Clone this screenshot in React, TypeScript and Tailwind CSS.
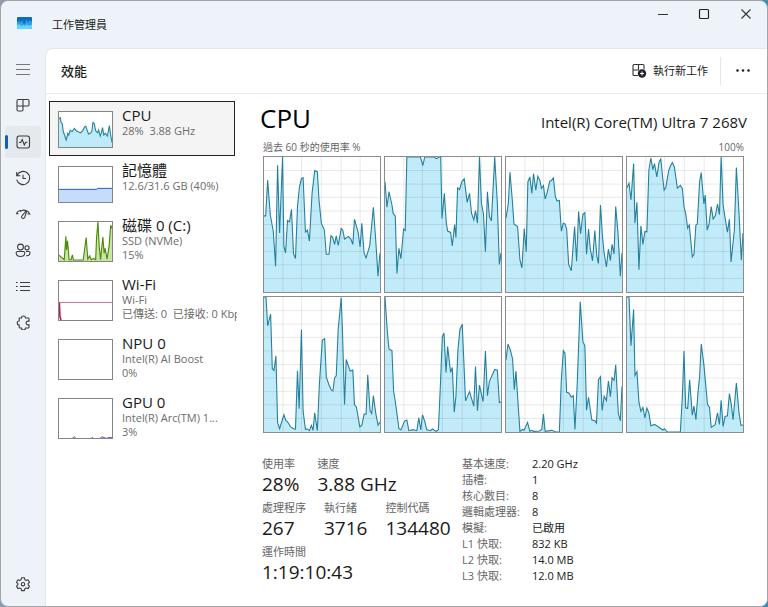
import React, { useState } from 'react';
import clsx from 'clsx';

interface Resource {
  id: string;
  name: string;
  lines: string[];
  graph: React.ReactNode;
}

// Usage curves, x runs 0-350 and y runs 0 (100%) to 408 (0%)
const CORES = [
  '0,178 5,178 11,70 19,175 28,225 35,330 41,25 47,230 56,0 60,270 65,290 71,192 77,196 83,158 89,292 95,307 101,150 107,90 113,65 118,63 125,227 131,221 137,254 145,110 153,41 161,45 166,130 173,200 182,220 188,294 196,294 202,238 207,242 213,264 218,238 224,267 233,216 238,222 243,248 255,240 262,248 268,264 273,188 284,228 290,272 295,200 302,290 308,305 319,268 330,152 337,250 344,360 350,290',
  '0,75 6,152 12,105 21,145 25,172 31,178 36,352 42,276 48,307 56,218 61,222 66,0 107,0 114,26 120,0 149,0 154,5 159,3 162,0 168,0 172,186 179,110 185,200 189,224 198,228 203,269 210,204 214,243 219,93 225,98 232,74 239,66 248,137 255,110 261,170 268,190 273,162 279,200 285,0 291,140 297,172 303,286 309,105 315,180 321,193 331,0 339,140 345,325 350,290',
  '0,185 7,140 12,46 19,130 24,202 35,210 42,310 48,335 55,216 61,286 66,75 72,60 78,110 83,50 90,100 96,58 102,70 107,95 113,86 118,127 124,108 132,73 137,71 143,63 149,120 154,133 161,131 167,224 173,200 178,202 183,218 189,324 197,344 207,210 213,315 219,165 225,232 232,173 238,168 243,294 249,218 254,275 261,314 268,222 274,300 279,322 285,145 291,240 296,290 303,332 309,278 315,313 320,264 326,293 331,150 338,230 345,360 350,290',
  '0,92 6,79 12,130 20,20 24,200 30,137 36,341 42,208 48,264 54,225 60,226 66,40 72,3 78,38 83,20 90,60 97,15 102,6 108,65 112,100 117,92 126,40 132,25 137,17 143,30 152,94 161,86 167,96 172,150 177,170 183,215 188,205 197,302 202,294 208,205 212,203 219,75 224,47 232,142 236,115 242,221 248,200 254,150 260,187 267,176 273,142 279,174 284,0 290,145 296,184 303,227 309,188 314,317 324,220 330,32 338,170 345,312 350,230',
  '0,0 6,0 11,87 20,52 25,216 30,222 36,178 41,380 47,398 60,356 66,373 71,377 80,392 89,398 95,399 101,223 106,338 113,98 118,345 125,400 131,399 137,404 143,388 148,403 153,350 161,404 167,265 176,130 183,126 188,242 196,265 203,281 208,284 213,244 218,238 224,95 233,2 237,110 243,325 248,189 260,224 268,221 273,325 279,333 289,392 295,388 302,354 308,354 313,235 320,344 325,352 330,298 337,350 344,387 350,378',
  '0,0 7,105 12,157 21,162 26,285 31,315 42,398 48,402 59,375 66,372 72,404 84,401 96,404 102,365 108,402 113,356 120,376 126,401 137,404 143,399 154,406 161,402 167,270 173,120 178,109 184,228 189,150 198,228 203,213 209,348 214,300 220,160 226,98 233,82 243,314 255,286 268,330 273,210 279,344 285,266 296,316 303,163 309,298 315,255 331,219 339,221 345,319 350,317',
  '0,190 6,142 13,160 20,188 25,280 30,224 42,406 49,401 55,402 65,379 72,406 77,403 83,406 101,405 108,400 113,354 118,406 138,403 149,407 161,408 167,250 173,162 178,170 183,288 190,290 197,303 203,298 208,400 215,260 224,14 232,135 238,147 243,342 249,303 259,372 268,374 273,381 279,250 285,241 290,343 296,300 303,313 309,254 315,301 320,244 326,252 331,205 339,352 345,374 350,270',
  '0,0 6,0 12,147 20,38 24,237 30,226 36,318 42,346 48,334 54,365 60,336 66,350 72,389 83,385 95,393 108,402 113,398 122,408 161,408 167,300 172,163 177,335 183,337 189,250 197,357 202,330 208,371 214,290 219,242 224,142 232,205 243,325 249,334 254,394 266,386 273,350 279,385 284,312 290,391 296,361 303,359 309,292 314,320 320,371 330,260 338,350 344,388 350,387',
];

const CPU_MINI =
  '0,21 4,18 6,31 10,36 13,61 17,71 22,86 27,66 30,71 34,56 40,61 47,51 54,59 60,62 66,64 72,58 78,46 82,44 86,56 90,68 96,66 100,61 104,32 108,36 112,58 118,64 121,56 126,74 129,66 133,48 137,71 142,66 148,74 154,42 157,66 162,94';
const DISK_MINI =
  '0,102 7,108 16,116 21,44 23,86 26,58 31,116 37,116 41,101 44,117 74,117 78,86 83,48 88,114 94,104 98,116 106,112 112,116 115,46 119,0 123,76 127,116 134,46 138,96 141,81 147,114 153,76 158,10 162,20';

const Thumb = ({ tall, children }: { tall?: boolean; children?: React.ReactNode }) => (
  <span className={clsx('block w-[55px] shrink-0 border border-[#858585] bg-white', tall ? 'h-[41px]' : 'h-[37px]')}>
    <svg className="block h-full w-full" viewBox={tall ? '0 0 162 120' : '0 0 162 108'} preserveAspectRatio="none" aria-hidden="true">
      {children}
    </svg>
  </span>
);

const RESOURCES: Resource[] = [
  {
    id: 'cpu',
    name: 'CPU',
    lines: ['28%  3.88 GHz'],
    graph: (
      <Thumb>
        <polygon points={`0,108 ${CPU_MINI} 162,108`} fill="#bfeaf8" />
        <polyline points={CPU_MINI} fill="none" stroke="#2a86a3" strokeWidth="3.5" />
      </Thumb>
    ),
  },
  {
    id: 'memory',
    name: '記憶體',
    lines: ['12.6/31.6 GB (40%)'],
    graph: (
      <Thumb>
        <polygon points="0,108 0,69 115,69 117,66 162,66 162,108" fill="#c5dcfa" />
        <polyline points="0,69 115,69 117,66 162,66" fill="none" stroke="#1b5fbf" strokeWidth="3" />
      </Thumb>
    ),
  },
  {
    id: 'disk',
    name: '磁碟 0 (C:)',
    lines: ['SSD (NVMe)', '15%'],
    graph: (
      <Thumb tall>
        <polygon points={`0,120 ${DISK_MINI} 162,120`} fill="#c9e6a4" />
        <polyline points={DISK_MINI} fill="none" stroke="#4f8a10" strokeWidth="3.5" />
      </Thumb>
    ),
  },
  {
    id: 'wifi',
    name: 'Wi-Fi',
    lines: ['Wi-Fi', '已傳送: 0  已接收: 0 Kbps'],
    graph: (
      <Thumb tall>
        <path d="M0 66H162" stroke="#cf6f93" strokeWidth="3" />
        <path d="M1 66L3 110L6 120" fill="none" stroke="#c2185b" strokeWidth="5" />
      </Thumb>
    ),
  },
  { id: 'npu', name: 'NPU 0', lines: ['Intel(R) AI Boost', '0%'], graph: <Thumb tall /> },
  {
    id: 'gpu',
    name: 'GPU 0',
    lines: ['Intel(R) Arc(TM) 1...', '3%'],
    graph: (
      <Thumb tall>
        <path d="M42 120L46 116L51 120M100 119H104M127 120L131 116L138 119L144 120M148 119H162" fill="none" stroke="#7a35a8" strokeWidth="3" />
      </Thumb>
    ),
  },
];

const icon = 'h-4 w-4 fill-none stroke-[#3c3c3c] stroke-[1.1]';

const NAV = [
  {
    id: 'processes',
    label: '處理程序',
    svg: (
      <svg className={icon} viewBox="0 0 16 16">
        <path d="M8 1.500H3.200A1.200 1.200 0 0 0 2 2.700V11.800A1.200 1.200 0 0 0 3.200 13H6.800A1.200 1.200 0 0 0 8 11.800ZM8 1.500H12.800A1.200 1.200 0 0 1 14 2.700V6.800A1.200 1.200 0 0 1 12.800 8H2" />
      </svg>
    ),
  },
  {
    id: 'performance',
    label: '效能',
    svg: (
      <svg className={icon} viewBox="0 0 16 16">
        <rect x="2" y="2" width="12.500" height="12" rx="2.200" />
        <path d="M4 8.500H5.700L7.200 5.500L9.300 11L10.700 8.200H12.500" />
      </svg>
    ),
  },
  {
    id: 'history',
    label: '應用程式歷程記錄',
    svg: (
      <svg className={icon} viewBox="0 0 16 16">
        <path d="M1.700 2V5.700H5.400M2 5.500A6.600 6.600 0 1 1 1.700 9.600M8 4.700V8.500H11" />
      </svg>
    ),
  },
  {
    id: 'startup',
    label: '啟動應用程式',
    svg: (
      <svg className={icon} viewBox="0 0 16 16">
        <path d="M1.200 7.800C2.200 5.800 3.800 4.600 5.800 4.200M1.200 7.800H3.500M10.500 4.200C12.600 4.700 14 6 14.800 8H12.500M5.200 5.700C7.500 3.600 9.500 3.700 11.300 5.300" />
        <path d="M11 5L7.200 9.600A1.600 1.600 0 1 0 9.700 11.400L11.600 5.400Z" />
      </svg>
    ),
  },
  {
    id: 'users',
    label: '使用者',
    svg: (
      <svg className={icon} viewBox="0 0 16 16">
        <circle cx="5.500" cy="5" r="2.900" />
        <circle cx="12" cy="5.800" r="2.100" />
        <path d="M2.500 9.500H8.500A1.300 1.300 0 0 1 9.800 10.800C9.800 13.200 8 14.500 5.500 14.500S1.200 13.200 1.200 10.800A1.300 1.300 0 0 1 2.500 9.500ZM11 9.500H13.700A1.300 1.300 0 0 1 15 10.800C15 12.900 13.500 14 11 13.700" />
      </svg>
    ),
  },
  {
    id: 'details',
    label: '詳細資料',
    svg: (
      <svg className={icon} viewBox="0 0 16 16">
        <path d="M5 4.500H15M5 8.500H15M5 12.500H15M1 4.500H2.600M1 8.500H2.600M1 12.500H2.600" />
      </svg>
    ),
  },
  {
    id: 'services',
    label: '服務',
    svg: (
      <svg className={icon} viewBox="0 0 16 16">
        <path d="M4.200 4H6.500A2 2 0 0 1 10.500 4H13.200A.800 .800 0 0 1 14 4.800V7.100H13A1.900 1.900 0 0 0 13 10.900H14V13.200A.800 .800 0 0 1 13.200 14H10.500A2 2 0 0 1 6.500 14H5A.800 .800 0 0 1 4.200 13.200V11A2 2 0 0 1 4.200 7Z" />
      </svg>
    ),
  },
];

const SPECS = [
  ['基本速度:', '2.20 GHz'],
  ['插槽:', '1'],
  ['核心數目:', '8'],
  ['邏輯處理器:', '8'],
  ['模擬:', '已啟用'],
  ['L1 快取:', '832 KB'],
  ['L2 快取:', '14.0 MB'],
  ['L3 快取:', '12.0 MB'],
];

const CoreChart = ({ points }: { points: string }) => (
  <div className="h-[137px] border border-[#8c8c8c] bg-white">
    <svg className="block h-full w-full" viewBox="0 0 350 408" preserveAspectRatio="none" aria-hidden="true">
      <polygon points={`0,408 ${points} 350,408`} fill="#c1ebf9" />
      <g stroke="#000" strokeOpacity="0.09" strokeWidth="3">
        {[57, 113, 173, 233, 290].map(x => <path key={x} d={`M${x} 0V408`} />)}
        {[41, 82, 122, 163, 204, 245, 286, 326, 367].map(y => <path key={y} d={`M0 ${y}H350`} />)}
      </g>
      <polyline points={points} fill="none" stroke="#25809d" strokeWidth="3.300" />
    </svg>
  </div>
);

const Stat = ({ label, value }: { label: string; value: string }) => (
  <div>
    <div className="text-[11px] leading-4 text-[#666]">{label}</div>
    <div className="text-[19px] leading-6 text-[#1a1a1a]">{value}</div>
  </div>
);

const App: React.FC = () => {
  const [activeNav, setActiveNav] = useState('performance');
  const [selected, setSelected] = useState('cpu');

  return (
    <div className="min-h-screen flex bg-linear-to-r from-[#8c9cae] to-[#4089bd] font-['Open_Sans','Noto_Sans_CJK_TC',sans-serif] text-[#1a1a1a]">
      <div className="flex-1 min-w-0 flex flex-col overflow-hidden rounded-lg border border-[#a0a5aa] bg-[#eef3f9]">
        {/* Title bar */}
        <header className="h-[47px] shrink-0 flex justify-between">
          <div className="flex items-center pl-4">
            <svg className="w-[15px] h-3 -mt-1" viewBox="0 0 15 12" aria-hidden="true">
              <rect width="15" height="12" rx="1" fill="#0c6cb8" />
              <path d="M0 6L2 3.500L3.500 6L5 2.500L6.500 7L8 6.500L9.500 2.500L11 6L12.500 3L15 5V11A1 1 0 0 1 14 12H1A1 1 0 0 1 0 11Z" fill="#27a7ea" />
              <path d="M0 8.500L2 7L4 9L6 8L8 9L10 7.500L12 9L15 7.500V11A1 1 0 0 1 14 12H1A1 1 0 0 1 0 11Z" fill="#6bd3fb" />
            </svg>
            <h1 className="ml-5 text-[11px] leading-4">工作管理員</h1>
          </div>
          <div className="flex h-[26px]">
            <button aria-label="最小化" className="w-10 flex items-center justify-center">
              <svg className="w-3 h-3" viewBox="0 0 12 12" stroke="#333"><path d="M1 6.500H11" /></svg>
            </button>
            <button aria-label="最大化" className="w-[42px] flex items-center justify-center">
              <svg className="w-3 h-3" viewBox="0 0 12 12" fill="none" stroke="#222" strokeWidth="1.200"><rect x="1.500" y="1.500" width="9" height="9" rx="1" /></svg>
            </button>
            <button aria-label="關閉" className="w-[42px] flex items-center justify-center">
              <svg className="w-3 h-3" viewBox="0 0 12 12" stroke="#333" strokeWidth="1.100"><path d="M1.500 1.500L10.500 10.500M10.500 1.500L1.500 10.500" /></svg>
            </button>
          </div>
        </header>

        <div className="flex-1 flex">
          <nav className="w-11 shrink-0 flex flex-col gap-1 pl-1 py-1.5">
            <button aria-label="開啟導覽" className="w-9 h-8 flex items-center justify-center">
              <svg className="h-4 w-4 stroke-[#777]" viewBox="0 0 16 16"><path d="M1 2.500H15M1 7.500H15M1 12.500H15" /></svg>
            </button>
            {NAV.map(item => (
              <button
                key={item.id}
                aria-label={item.label}
                onClick={() => setActiveNav(item.id)}
                className={clsx('relative w-9 h-8 rounded flex items-center justify-center', activeNav === item.id && 'bg-[#e4e9ee]')}
              >
                {activeNav === item.id && <span className="absolute left-0 top-[9px] h-3.5 w-[3px] rounded-full bg-[#0f62b5]" />}
                {item.svg}
              </button>
            ))}
            <button aria-label="設定" className="mt-auto w-9 h-8 flex items-center justify-center">
              <svg className={icon} viewBox="0 0 16 16">
                <path d="M6.600 1.800H9.400L9.900 3.700L11.200 4.400L13 3.800L14.500 6.300L13.100 7.600V8.800L14.500 10.100L13 12.600L11.200 12L9.900 12.700L9.400 14.600H6.600L6.100 12.700L4.800 12L3 12.600L1.500 10.100L2.900 8.800V7.600L1.500 6.300L3 3.800L4.800 4.400L6.100 3.700Z" strokeLinejoin="round" />
                <circle cx="8" cy="8.200" r="1.700" />
              </svg>
            </button>
          </nav>

          <main className="flex-1 min-w-0 flex flex-col rounded-tl-lg border-t border-l border-[#e3e8ed] bg-white">
            <div className="h-[45px] shrink-0 flex items-center border-b border-[#e9ecf1] pl-[15px] pr-2">
              <h2 className="text-[13px] leading-5 font-medium">效能</h2>
              <button className="ml-auto flex items-center gap-1.5 text-[11px] leading-4">
                <svg className="w-4 h-4" viewBox="0 0 16 16" fill="none" stroke="#333" strokeWidth="1.100">
                  <path d="M7 12.500H3A1 1 0 0 1 2 11.500V2.500A1 1 0 0 1 3 1.500H12A1 1 0 0 1 13 2.500V6.500M7.500 1.500V7M2 7H8" />
                  <circle cx="11" cy="10.500" r="4.200" fill="#222" stroke="none" />
                  <path d="M11 8.500V12.500M9 10.500H13" stroke="#fff" />
                </svg>
                執行新工作
              </button>
              <span className="ml-3 h-7 w-px bg-[#e6e6e6]" />
              <button aria-label="更多選項" className="ml-1.5 w-8 h-8 flex items-center justify-center">
                <svg className="w-4 h-4" viewBox="0 0 16 16" fill="#222">
                  <circle cx="2.500" cy="7.500" r="1.300" /><circle cx="8" cy="7.500" r="1.300" /><circle cx="13.500" cy="7.500" r="1.300" />
                </svg>
              </button>
            </div>

            <div className="flex-1 flex">
              {/* Resource list */}
              <div className="w-[191px] shrink-0 overflow-hidden pl-[3px] pt-[7px]">
                {RESOURCES.map(r => (
                  <button
                    key={r.id}
                    onClick={() => setSelected(r.id)}
                    className={clsx(
                      'flex w-[186px] items-start gap-[9px] border pl-2 pt-[9px] pb-[7px] text-left',
                      selected === r.id ? 'border-[#222] bg-[#f4f4f4]' : 'border-transparent'
                    )}
                  >
                    {r.graph}
                    <span className="-mt-1 -mb-2 block whitespace-pre">
                      <span className="block text-[15px] leading-[17px]">{r.name}</span>
                      {r.lines.map(line => (
                        <span key={line} className="block text-[11px] leading-[14px] text-[#6c6c6c]">{line}</span>
                      ))}
                    </span>
                  </button>
                ))}
              </div>

              {/* Details */}
              <section className="flex-1 min-w-0 pl-[23px] pr-5 pt-1.5">
                <div className="mb-0.5 flex items-baseline justify-between">
                  <h3 className="text-[26px] leading-9 text-black">CPU</h3>
                  <span className="text-[15px] leading-5">Intel(R) Core(TM) Ultra 7 268V</span>
                </div>
                <div className="flex justify-between px-[3px] text-[10px] leading-[18px] text-[#666]">
                  <span>過去 60 秒的使用率 %</span>
                  <span>100%</span>
                </div>
                <div className="grid grid-cols-4 gap-[3px] px-[3px]">
                  {CORES.map((points, i) => <CoreChart key={i} points={points} />)}
                </div>

                <div className="mt-[23px] flex pl-0.5">
                  <div className="w-[200px] space-y-1">
                    <div className="flex gap-[18px]">
                      <Stat label="使用率" value="28%" />
                      <Stat label="速度" value="3.88 GHz" />
                    </div>
                    <div className="flex gap-[18px]">
                      <Stat label="處理程序" value="267" />
                      <Stat label="執行緒" value="3716" />
                      <Stat label="控制代碼" value="134480" />
                    </div>
                    <Stat label="運作時間" value="1:19:10:43" />
                  </div>
                  <table className="self-start text-[11px] leading-4">
                    <tbody>
                      {SPECS.map(([label, value]) => (
                        <tr key={label}>
                          <th scope="row" className="w-[70px] p-0 text-left font-normal text-[#666]">{label}</th>
                          <td className="p-0">{value}</td>
                        </tr>
                      ))}
                    </tbody>
                  </table>
                </div>
              </section>
            </div>
          </main>
        </div>
      </div>
    </div>
  );
};

export default App;
